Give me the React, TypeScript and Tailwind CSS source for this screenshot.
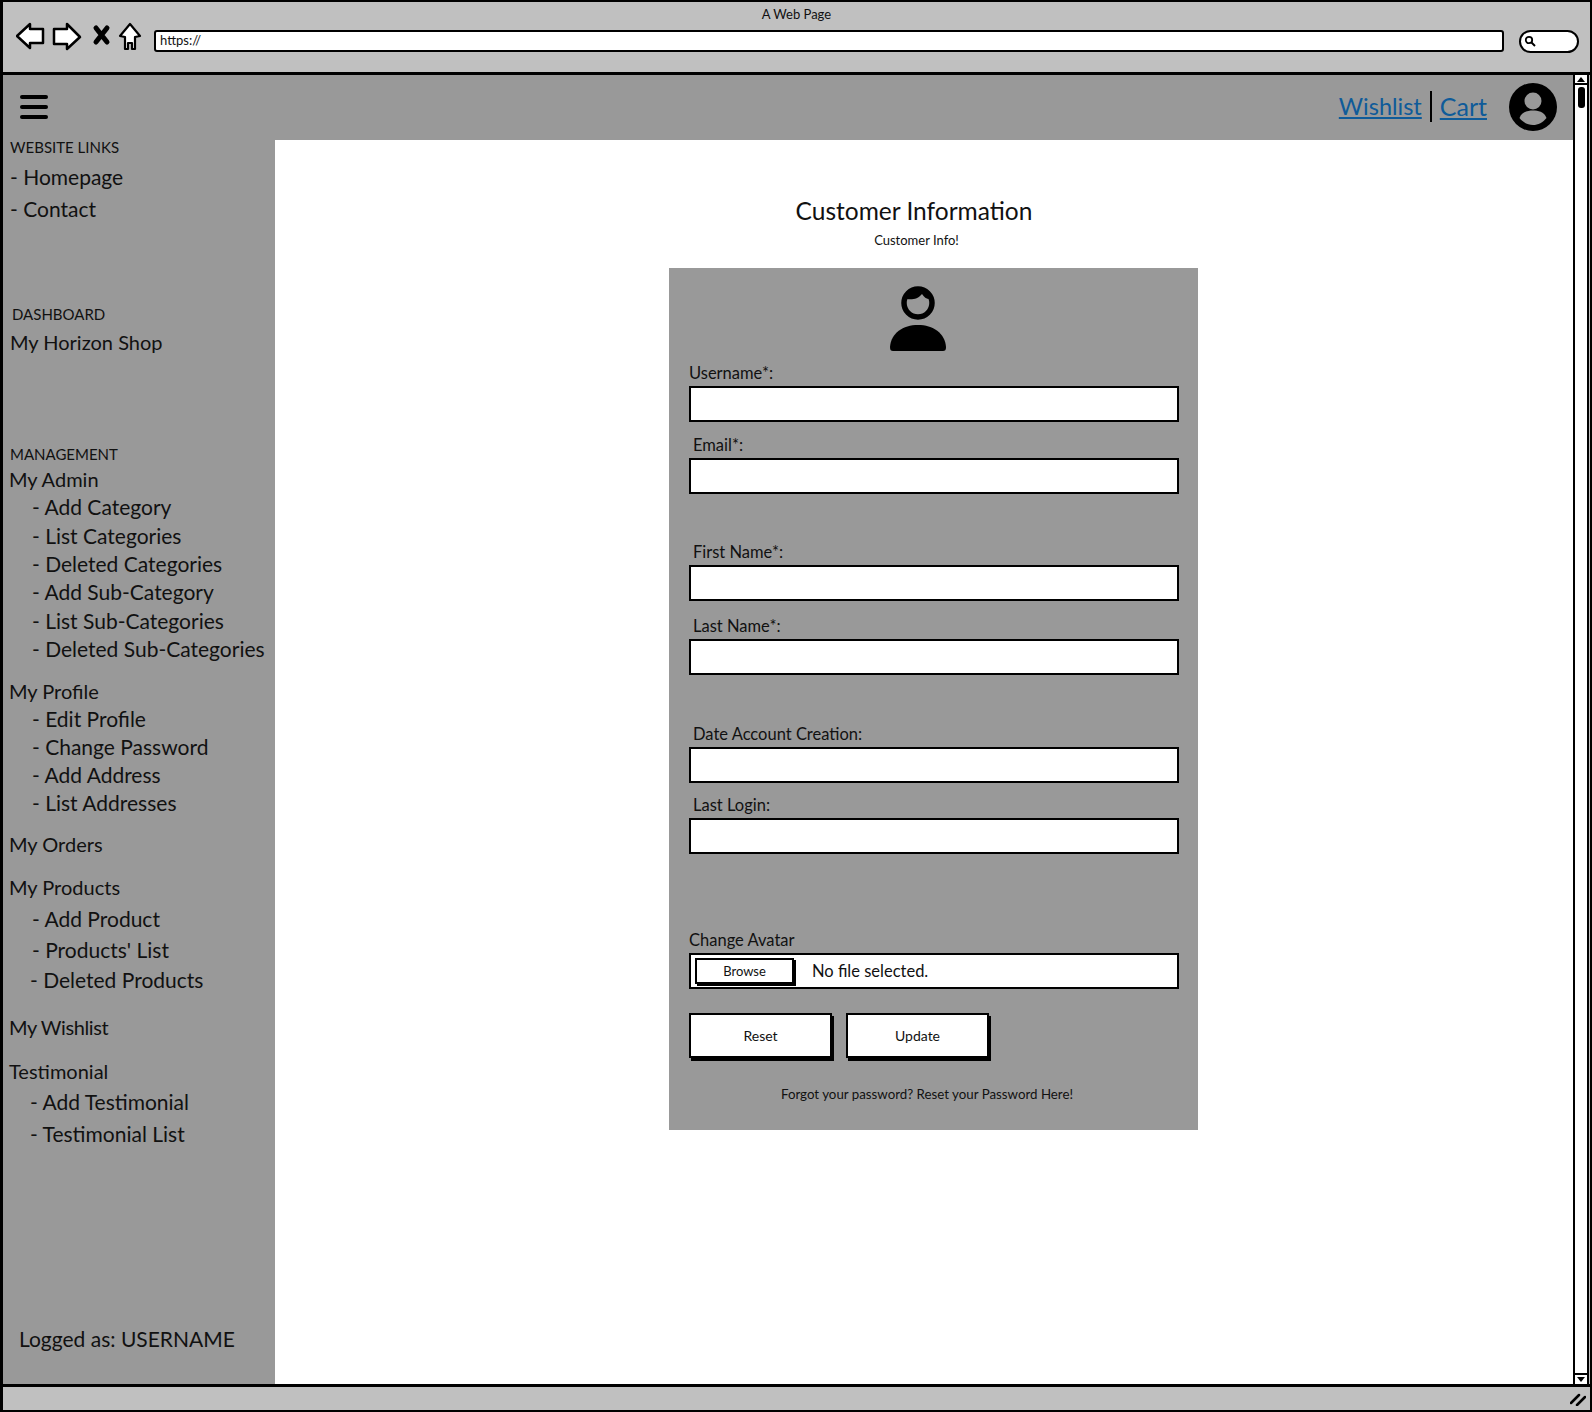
const font = "font-['Lato','Liberation_Sans',sans-serif]";

const NavHead = ({ text, className }: { text: string; className: string }) => (
  <div className={`flex items-center text-[15px] text-[#111] ${className}`}>{text}</div>
);

const NavLink = ({ text, className }: { text: string; className: string }) => (
  <div className={`flex items-center text-[21px] whitespace-nowrap text-[#111] ${className}`}>{text}</div>
);

const NavTop = ({ text, className }: { text: string; className: string }) => (
  <div className={`flex items-center text-[20px] whitespace-nowrap text-[#111] ${className}`}>{text}</div>
);

const Field = ({ label, className, labelClass }: { label: string; className: string; labelClass: string }) => (
  <div className={className}>
    <div className={`h-[24px] leading-[22px] text-[16.5px] text-[#111] ${labelClass}`}>{label}</div>
    <div className="h-[36px] w-[490px] border-2 border-black bg-white" />
  </div>
);

const Sidebar = () => (
  <aside className="w-[272px] shrink-0 bg-[#999999] flex flex-col">
    <NavHead text="WEBSITE LINKS" className="h-[15px] pl-[7px] mb-[6px]" />
    <NavLink text="- Homepage" className="h-[32px] pl-[7px]" />
    <NavLink text="- Contact" className="h-[32px] pl-[7px]" />
    <NavHead text="DASHBOARD" className="h-[15px] pl-[9px] mt-[82px]" />
    <NavTop text="My Horizon Shop" className="h-[32px] pl-[7px] mt-[4px] mb-[1px]" />
    <NavHead text="MANAGEMENT" className="h-[15px] pl-[7px] mt-[88px]" />
    <NavTop text="My Admin" className="h-[28px] pl-[6px] mt-[3px]" />
    <NavLink text="- Add Category" className="h-[28px] pl-[29px]" />
    <NavLink text="- List Categories" className="h-[29px] pl-[29px]" />
    <NavLink text="- Deleted Categories" className="h-[28px] pl-[29px]" />
    <NavLink text="- Add Sub-Category" className="h-[28px] pl-[29px]" />
    <NavLink text="- List Sub-Categories" className="h-[29px] pl-[29px]" />
    <NavLink text="- Deleted Sub-Categories" className="h-[28px] pl-[29px]" />
    <NavTop text="My Profile" className="h-[28px] pl-[6px] mt-[14px]" />
    <NavLink text="- Edit Profile" className="h-[28px] pl-[29px]" />
    <NavLink text="- Change Password" className="h-[28px] pl-[29px]" />
    <NavLink text="- Add Address" className="h-[28px] pl-[29px]" />
    <NavLink text="- List Addresses" className="h-[28px] pl-[29px]" />
    <NavTop text="My Orders" className="h-[28px] pl-[6px] mt-[13px]" />
    <NavTop text="My Products" className="h-[28px] pl-[6px] mt-[15px]" />
    <NavLink text="- Add Product" className="h-[30px] pl-[29px] mt-[3px]" />
    <NavLink text="- Products' List" className="h-[31px] pl-[29px]" />
    <NavLink text="- Deleted Products" className="h-[30px] pl-[27px]" />
    <NavTop text="My Wishlist" className="h-[28px] pl-[6px] mt-[18px] tracking-[-0.4px]" />
    <NavTop text="Testimonial" className="h-[28px] pl-[6px] mt-[16px]" />
    <NavLink text="- Add Testimonial" className="h-[33px] pl-[27px]" />
    <NavLink text="- Testimonial List" className="h-[32px] pl-[27px]" />
    <NavLink text="Logged as: USERNAME" className="h-[30px] pl-[16px] mt-auto mb-[30px]" />
  </aside>
);

const TopBar = () => (
  <div className="h-[73px] shrink-0 border-b-[3px] border-black bg-[#c0c0c0] flex flex-col">
    <div className="h-[27px] text-center text-[13px] leading-[24px] text-[#111]">A Web Page</div>
    <div className="flex items-center h-[24px] pl-[13px] pr-[9px]">
      <svg width="126" height="30" viewBox="0 0 126 30" className="shrink-0 mt-[-8px]">
        <path d="M1 14 L14 2 L14 7 L27 7 L27 21 L14 21 L14 26 Z" fill="#fff" stroke="#000" strokeWidth="2.5" strokeLinejoin="round" />
        <path d="M64 15 L51 2 L51 7 L38 7 L38 22 L51 22 L51 27 Z" fill="#fff" stroke="#000" strokeWidth="2.5" strokeLinejoin="round" />
        <path d="M80 6 L91 20 M91 6 L80 20" stroke="#000" strokeWidth="5" strokeLinecap="round" fill="none" />
        <path d="M114 2 L124 14 L119 15 L119 27 L116 27 L116 21 L112 21 L112 27 L109 27 L109 15 L104 14 Z" fill="#fff" stroke="#000" strokeWidth="2.2" strokeLinejoin="round" />
      </svg>
      <div className="ml-[12px] h-[22px] w-[1350px] shrink-0 rounded-[3px] border-[2.5px] border-black bg-white pl-[4px] text-[13px] leading-[16px] text-[#111]">
        https://
      </div>
      <div className="ml-[15px] h-[23px] w-[60px] shrink-0 rounded-full border-2 border-black bg-white flex items-center pl-[3px]">
        <svg width="12" height="12" viewBox="0 0 12 12">
          <circle cx="5" cy="5" r="3.2" fill="none" stroke="#000" strokeWidth="1.8" />
          <path d="M7.5 7.5 L11 11" stroke="#000" strokeWidth="2" />
        </svg>
      </div>
    </div>
  </div>
);

const Header = () => (
  <header className="h-[65px] shrink-0 bg-[#999999] flex items-center pl-[17px] pr-[16px]">
    <div className="flex flex-col gap-[6px] mt-[-2px]">
      <div className="h-[4px] w-[28px] rounded-full bg-black" />
      <div className="h-[4px] w-[28px] rounded-full bg-black" />
      <div className="h-[4px] w-[28px] rounded-full bg-black" />
    </div>
    <div className="ml-auto flex items-center text-[#0f5b99] mt-[-2px]">
      <span className="text-[23.5px] underline underline-offset-2">Wishlist</span>
      <div className="mx-[8px] h-[31px] w-[2px] bg-black" />
      <span className="text-[25px] underline underline-offset-2">Cart</span>
    </div>
    <svg width="48" height="48" viewBox="0 0 48 48" className="ml-[22px] shrink-0 mt-[-2px]">
      <circle cx="24" cy="24" r="24" fill="#000" />
      <circle cx="24" cy="18" r="8.5" fill="#999999" />
      <path d="M10.5 35 C13 28.5 19 27.5 24 27.5 C29 27.5 35 28.5 37.5 35 C34 39.5 29 42 24 42 C19 42 14 39.5 10.5 35 Z" fill="#999999" />
    </svg>
  </header>
);

const CustomerForm = () => (
  <main className="flex-1 bg-white flex flex-col">
    <h1 className="mt-[56px] ml-[394px] h-[30px] w-[490px] text-center text-[24.5px] leading-[30px] text-[#111]">
      Customer Information
    </h1>
    <p className="mt-[5px] ml-[394px] w-[490px] text-center text-[13px] leading-[18px] text-[#111] pl-[5px]">Customer Info!</p>
    <section className="mt-[19px] ml-[394px] h-[862px] w-[529px] bg-[#999999] pl-[20px] flex flex-col">
      <svg width="56" height="66" viewBox="0 0 56 66" className="mt-[17px] ml-[201px] shrink-0">
        <circle cx="28" cy="18" r="14" fill="none" stroke="#000" strokeWidth="5.5" />
        <path d="M17 14 C22 15 28 14 32 9 C34 12 36 14 40 14 L38 5 L18 5 Z" fill="#000" />
        <path d="M0 62 C1 48 13 40 28 40 C43 40 55 48 56 62 C56 65 55 66 53 66 L3 66 C1 66 0 65 0 62 Z" fill="#000" />
      </svg>
      <Field label="Username*:" className="mt-[11px]" labelClass="" />
      <Field label="Email*:" className="mt-[12px]" labelClass="pl-[4px]" />
      <Field label="First Name*:" className="mt-[47px]" labelClass="pl-[4px]" />
      <Field label="Last Name*:" className="mt-[14px]" labelClass="pl-[4px]" />
      <Field label="Date Account Creation:" className="mt-[48px]" labelClass="pl-[4px]" />
      <Field label="Last Login:" className="mt-[11px]" labelClass="pl-[4px]" />
      <div className="mt-[75px]">
        <div className="h-[24px] leading-[22px] text-[16.5px] text-[#111]">Change Avatar</div>
        <div className="h-[36px] w-[490px] border-2 border-black bg-white flex items-center pl-[4px]">
          <div className="h-[26px] w-[99px] border-2 border-black bg-white text-center text-[13px] leading-[22px] text-[#111] shadow-[2px_2px_0_#000]">
            Browse
          </div>
          <span className="ml-[18px] text-[16.5px] text-[#111]">No file selected.</span>
        </div>
      </div>
      <div className="mt-[24px] flex gap-[14px]">
        <div className="h-[45px] w-[143px] border-2 border-black bg-white text-center text-[14px] leading-[41px] text-[#111] shadow-[2px_3px_0_#000]">
          Reset
        </div>
        <div className="h-[45px] w-[143px] border-2 border-black bg-white text-center text-[14px] leading-[41px] text-[#111] shadow-[2px_3px_0_#000]">
          Update
        </div>
      </div>
      <p className="mt-[27px] w-[476px] text-center text-[13.3px] leading-[18px] text-[#111]">
        Forgot your password? Reset your Password Here!
      </p>
    </section>
  </main>
);

const Scrollbar = () => (
  <div className="w-[16px] shrink-0 self-stretch bg-white border-x-[2px] border-black flex flex-col items-center justify-between">
    <div className="w-full">
      <div className="h-[10px] border-b-2 border-black flex items-center justify-center">
        <div className="h-0 w-0 border-x-[4px] border-b-[5px] border-x-transparent border-b-black" />
      </div>
      <div className="mx-auto mt-[2px] h-[21px] w-[7px] rounded-[3px] bg-black" />
    </div>
    <div className="h-[11px] w-full border-t-2 border-black flex items-center justify-center">
      <div className="h-0 w-0 border-x-[4px] border-t-[5px] border-x-transparent border-t-black" />
    </div>
  </div>
);

const StatusBar = () => (
  <div className="h-[26px] shrink-0 border-t-[3px] border-black bg-[#c0c0c0] flex items-center justify-end pr-[4px]">
    <svg width="16" height="14" viewBox="0 0 16 14">
      <path d="M1 11 L9 3 M7 13 L15 5" stroke="#000" strokeWidth="2.5" strokeLinecap="round" />
    </svg>
  </div>
);

export default function App() {
  return (
    <div className={`${font} h-[1412px] w-[1592px] border-[2px] border-l-[3px] border-black bg-[#c0c0c0] flex flex-col overflow-hidden`}>
      <TopBar />
      <div className="flex flex-1 min-h-0 pr-[1px]">
        <div className="flex-1 min-w-0 flex flex-col">
          <Header />
          <div className="flex flex-1 min-h-0">
            <Sidebar />
            <CustomerForm />
          </div>
        </div>
        <Scrollbar />
      </div>
      <StatusBar />
    </div>
  );
}
